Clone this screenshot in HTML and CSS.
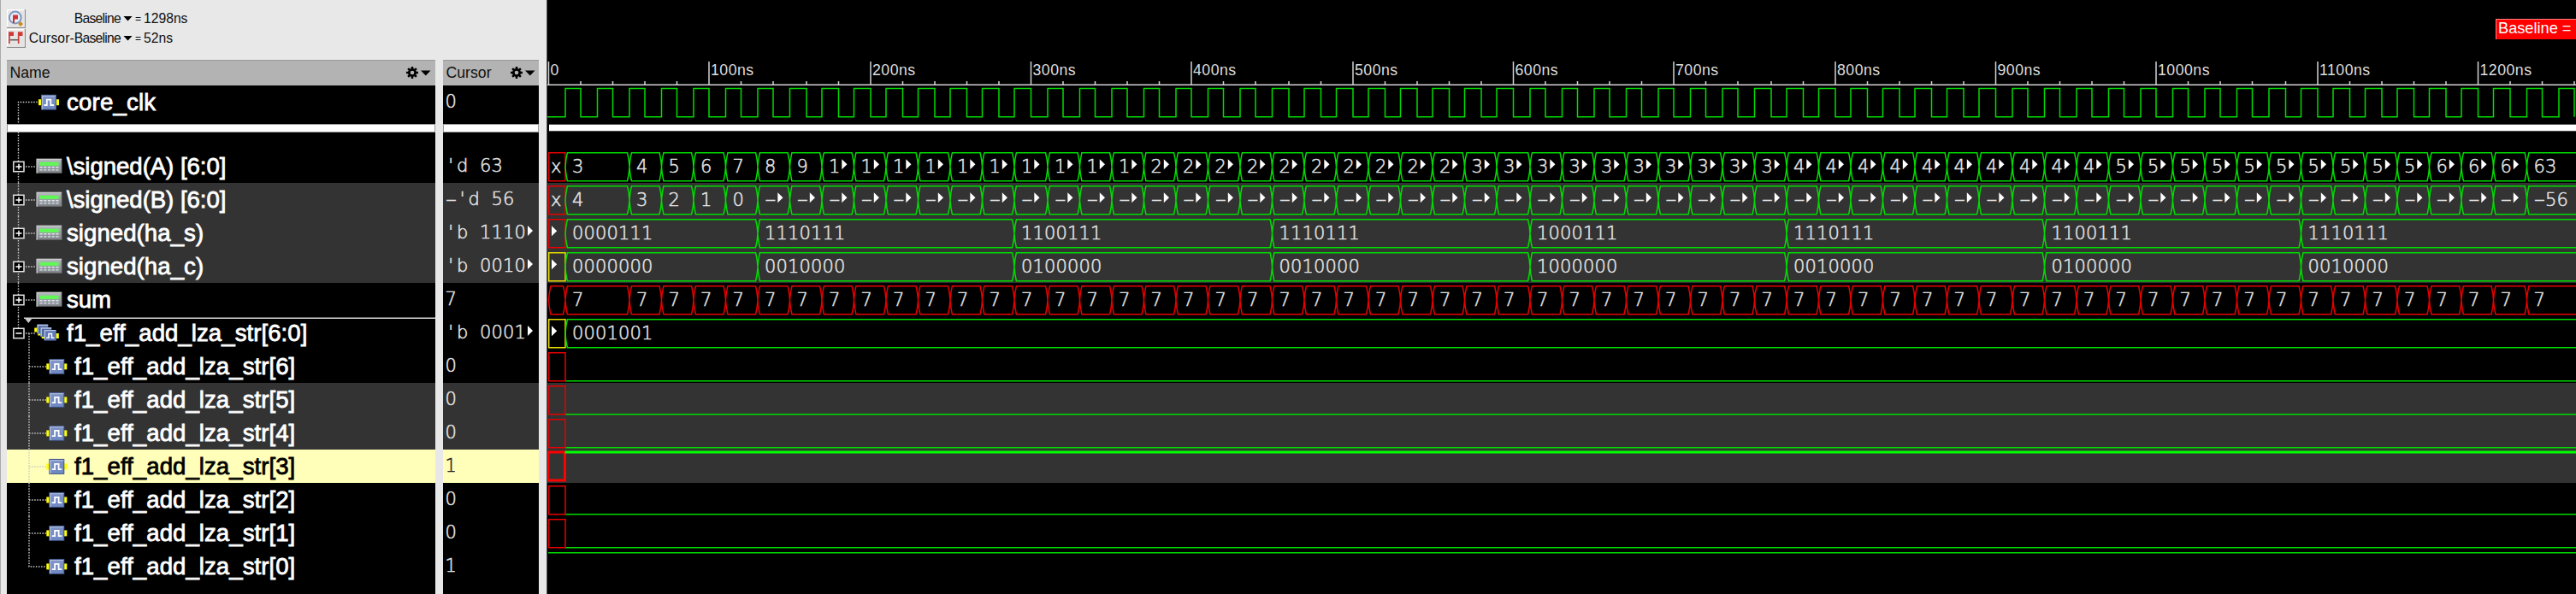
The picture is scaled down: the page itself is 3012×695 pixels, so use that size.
FILE: index.html
```html
<!DOCTYPE html>
<html lang="en">
<head>
<meta charset="utf-8">
<title>Waveform</title>
<link rel="stylesheet" href="styles.css">
</head>
<body>
<svg class="defs" width="0" height="0" aria-hidden="true">
  <defs>
    <linearGradient id="gBlue" x1="0" y1="0" x2="0" y2="1"><stop offset="0" stop-color="#7f93c4"/><stop offset="1" stop-color="#7089c4"/></linearGradient>
    <linearGradient id="gBus" x1="0" y1="0" x2="0" y2="1"><stop offset="0" stop-color="#b4b9be"/><stop offset="1" stop-color="#80868d"/></linearGradient>
    <symbol id="wire" viewBox="0 0 24 18" overflow="visible">
      <rect x="0" y="5.5" width="24" height="7" fill="#ff0"/>
      <rect x="3" y="0" width="18" height="18" fill="#3f5587"/>
      <rect x="4" y="1" width="16" height="16" fill="url(#gBlue)"/>
      <path d="M4.5 17V1.7H20" fill="none" stroke="#a9b8dc" stroke-width="1.4"/>
      <path d="M6.5 12.3H9.8V6H14.3V12.3H18" fill="none" stroke="#fff" stroke-width="1.8"/>
    </symbol>
    <symbol id="bus" viewBox="0 0 30 17" overflow="visible">
      <rect x="0" y="0" width="30" height="17" fill="#777"/>
      <rect x="1" y="1" width="28" height="15" fill="url(#gBus)"/>
      <path d="M.7 17V.7H29.5" fill="none" stroke="#ccc" stroke-width="1.2"/>
      <rect x="4" y="4" width="22" height="4.2" fill="#60f855"/>
      <path d="M4 10H26M4 13.2H26" stroke="#dfe5ea" stroke-width="1.4" stroke-dasharray="3.2 1.5"/>
    </symbol>
    <symbol id="wires" viewBox="0 0 29 19" overflow="visible">
      <rect x="0" y="4" width="4" height="5" fill="#ff0"/><rect x="4" y="7" width="4" height="6" fill="#ff0"/><rect x="8.5" y="10.5" width="4" height="6" fill="#ff0"/><rect x="25" y="10.5" width="3.6" height="6" fill="#ff0"/>
      <rect x="3" y="0" width="13" height="11" fill="#5068a0"/><path d="M4 10V1H16" fill="none" stroke="#b8c5e4" stroke-width="1.3"/>
      <rect x="7" y="3.5" width="13" height="11" fill="#5068a0"/><path d="M8 14V4.5H20" fill="none" stroke="#b8c5e4" stroke-width="1.3"/>
      <rect x="11.5" y="6.5" width="14" height="12.5" fill="#5f79b8"/><path d="M12.2 18V7.2H25" fill="none" stroke="#b8c5e4" stroke-width="1.3"/>
      <path d="M14 15.7H16.8V11H20.3V15.7H23.2" fill="none" stroke="#fff" stroke-width="1.5"/>
    </symbol>
    <symbol id="plus" viewBox="0 0 14 13" overflow="visible">
      <rect x=".8" y=".8" width="12.2" height="11.4" fill="#000" stroke="#e4e4e4" stroke-width="1.5"/><path d="M3.5 6.5H10.5M7 3.2V9.8" stroke="#fff" stroke-width="1.5"/>
    </symbol>
    <symbol id="minus" viewBox="0 0 14 13" overflow="visible">
      <rect x=".8" y=".8" width="12.2" height="11.4" fill="#000" stroke="#e4e4e4" stroke-width="1.5"/><path d="M3.5 6.5H10.5" stroke="#fff" stroke-width="1.5"/>
    </symbol>
    <symbol id="gear" viewBox="0 0 30 14" overflow="visible">
      <circle cx="7" cy="7" r="3.7" fill="none" stroke="#000" stroke-width="2.8"/>
      <path d="M7 0V3M7 11V14M0 7H3M11 7H14M2.1 2.1L4.2 4.2M9.8 9.8L11.9 11.9M2.1 11.9L4.2 9.8M9.8 4.2L11.9 2.1" stroke="#000" stroke-width="2.5"/>
      <path d="M17 4.5H28.5L22.8 10.5Z" fill="#000"/>
    </symbol>
    <!-- tree gutters: expandable root, child, last child -->
    <symbol id="tBus" viewBox="0 0 72 39"><path class="dots" d="M13.5 0V39M22 20H33"/><use href="#plus" x="7" y="13.5" width="14" height="13"/><use href="#bus" x="34.5" y="10.7" width="30" height="17"/></symbol>
    <symbol id="tKid" viewBox="0 0 80 39"><path class="dots" d="M26 0V39M26 20H46"/><use href="#wire" x="46.3" y="10.9" width="24" height="18"/></symbol>
    <symbol id="tEnd" viewBox="0 0 80 39"><path class="dots" d="M26 0V20H46"/><use href="#wire" x="46.3" y="10.9" width="24" height="18"/></symbol>
  </defs>
</svg>

<div class="app">
  <div class="side">
    <div class="toolbar">
      <div class="tool">
        <svg class="btn" viewBox="0 0 22 22"><rect width="22" height="22" fill="#8c8c8c"/><rect width="20.7" height="20.7" fill="#fff"/><rect x="1.3" y="1.3" width="19.4" height="19.4" fill="#e6e4e2"/><path d="M14.5 15.5L17.5 18.5" stroke="#c98a18" stroke-width="4"/><circle cx="9.8" cy="9.5" r="6.9" fill="#e4edf8" stroke="#7f98c2" stroke-width="2"/><path d="M7 6.5H13V11.5H9V16H7Z" fill="#d03030"/></svg>
        <span class="label">Baseline</span><i class="caret"></i><span class="eq">=</span><span>1298ns</span>
      </div>
      <div class="tool">
        <svg class="btn" viewBox="0 0 22 22"><rect width="22" height="22" fill="#8c8c8c"/><rect width="20.7" height="20.7" fill="#fff"/><rect x="1.3" y="1.3" width="19.4" height="19.4" fill="#e6e4e2"/><path d="M4 12.7H14" stroke="#555" stroke-width="1.5"/><path d="M2.9 4V17M13.7 4V17" stroke="#cf3b3b" stroke-width="1.7"/><path d="M2 3.2H8V8H2ZM13 3.2H18.5V8H13Z" fill="#d03a3a"/></svg>
        <span class="label"><span class="wide">Cursor-</span>Baseline</span><i class="caret"></i><span class="eq">=</span><span>52ns</span>
      </div>
    </div>
    <div class="columns">
      <div class="col names">
        <div class="head"><span>Name</span><svg class="gear"><use href="#gear" width="30" height="14"/></svg></div>
        <div class="row"><svg class="gut"><path class="dots" d="M13.5 39V19.5H37"/><use href="#wire" x="37" y="10.7" width="24" height="18"/></svg><span class="clk">core_clk</span></div>
        <div class="gap"><svg class="gut"><path class="dots" d="M13.5 0V36"/></svg><b></b></div>
        <div class="row"><svg class="gut"><use href="#tBus" width="72" height="39"/></svg><span class="tight">\signed(A) [6:0]</span></div>
        <div class="row alt"><svg class="gut"><use href="#tBus" width="72" height="39"/></svg><span class="tight">\signed(B) [6:0]</span></div>
        <div class="row alt"><svg class="gut"><use href="#tBus" width="72" height="39"/></svg><span>signed(ha_s)</span></div>
        <div class="row alt"><svg class="gut"><use href="#tBus" width="72" height="39"/></svg><span>signed(ha_c)</span></div>
        <div class="row"><svg class="gut"><use href="#tBus" width="72" height="39"/></svg><span class="tight">sum</span></div>
        <div class="row"><svg class="gut"><path class="dots" d="M13.5 0V14M26 20V39M22 20H33"/><path d="M20 2.3H501" stroke="#d8d8d8" stroke-width="1.6"/><path d="M20.5 2H30L25.3 8Z" fill="#ccc"/><use href="#minus" x="7" y="13.5" width="14" height="13"/><use href="#wires" x="32.2" y="9.5" width="29" height="19"/></svg><span>f1_eff_add_lza_str[6:0]</span></div>
        <div class="row kid"><svg class="gut"><use href="#tKid" width="80" height="39"/></svg><span>f1_eff_add_lza_str[6]</span></div>
        <div class="row kid alt"><svg class="gut"><use href="#tKid" width="80" height="39"/></svg><span>f1_eff_add_lza_str[5]</span></div>
        <div class="row kid alt"><svg class="gut"><use href="#tKid" width="80" height="39"/></svg><span>f1_eff_add_lza_str[4]</span></div>
        <div class="row kid sel"><svg class="gut"><use href="#tKid" width="80" height="39"/></svg><span>f1_eff_add_lza_str[3]</span></div>
        <div class="row kid"><svg class="gut"><use href="#tKid" width="80" height="39"/></svg><span>f1_eff_add_lza_str[2]</span></div>
        <div class="row kid"><svg class="gut"><use href="#tKid" width="80" height="39"/></svg><span>f1_eff_add_lza_str[1]</span></div>
        <div class="row kid"><svg class="gut"><use href="#tEnd" width="80" height="39"/></svg><span>f1_eff_add_lza_str[0]</span></div>
      </div>
      <div class="col values">
        <div class="head"><span>Cursor</span><svg class="gear"><use href="#gear" width="30" height="14"/></svg></div>
        <div class="row">0</div>
        <div class="gap"><b></b></div>
        <div class="row"><i>'</i>d 63</div>
        <div class="row alt"><i class="neg">-</i><i>'</i>d 56</div>
        <div class="row alt"><i>'</i>b 1110<u class="more"></u></div>
        <div class="row alt"><i>'</i>b 0010<u class="more"></u></div>
        <div class="row">7</div>
        <div class="row"><i>'</i>b 0001<u class="more"></u></div>
        <div class="row">0</div>
        <div class="row alt">0</div>
        <div class="row alt">0</div>
        <div class="row sel">1</div>
        <div class="row">0</div>
        <div class="row">0</div>
        <div class="row">1</div>
      </div>
    </div>
  </div>
  <div class="waves" id="waves">
    <div class="marker"><span class="flag">Baseline =</span></div>
  </div>
</div>
<script src="waves.js"></script>
</body>
</html>
```

FILE: styles.css
```css
* { box-sizing: border-box; }
body { margin: 0; background: #000; overflow: hidden; font-family: "Liberation Sans", Arial, sans-serif; }
.defs { position: absolute; }
.app { display: flex; width: 3012px; height: 695px; }

.side { width: 640px; flex: none; background: #e8e8e8; border-left: 1.5px solid #aaa; border-right: 1px solid #555; display: flex; flex-direction: column; }
.toolbar { height: 70px; padding: 10px 0 0 7px; color: #111; font-size: 15.7px; }
.tool { display: flex; align-items: center; height: 23px; }
.btn { width: 22px; height: 22px; }
.label { width: 111px; text-align: right; letter-spacing: -0.75px; white-space: nowrap; }
.wide { letter-spacing: .1px; }
.caret { width: 11px; height: 6px; margin: 0 3px 0 3px; background: #000; clip-path: polygon(0 0, 100% 0, 50% 100%); }
.eq { font-size: 12px; width: 10px; }

.columns { display: flex; flex: 1; gap: 9px; padding-left: 6.5px; }
.col { display: flex; flex-direction: column; background: #000; color: #fff; }
.names { width: 501px; }
.values { width: 112px; }
.head { height: 30px; flex: none; display: flex; align-items: center; justify-content: space-between; background: #b3b3b3; border-top: 1.5px solid #9a9a9a; color: #111; font-size: 17.7px; padding: 0 4px 1px 4px; }
.gear { width: 30px; height: 14px; overflow: visible; }
.values .gear { margin-right: -1px; }
.row { height: 39px; flex: none; display: flex; align-items: center; white-space: pre; }
.alt { background: #333; }
.gap { height: 36px; flex: none; position: relative; }
.gap b { position: absolute; left: 1px; right: 1px; top: 7px; height: 8px; background: #fff; outline: .5px solid #999; }

.names .row { font-size: 27.6px; line-height: 39px; letter-spacing: .05px; -webkit-text-stroke: .8px currentColor; }
.names .clk { letter-spacing: .2px; }
.names .tight { letter-spacing: -.05px; }
.gut { width: 70.5px; height: 39px; flex: none; overflow: visible; }
.kid .gut { width: 79.5px; }
.dots { fill: none; stroke: #ccc; stroke-width: 1.4; stroke-dasharray: 1.5 1.6; }

.values .row { font: 200 21px/39px "DejaVu Sans", sans-serif; letter-spacing: .14px; word-spacing: 6.7px; color: #e4e4e4; -webkit-text-stroke: .5px currentColor; padding-left: 3px; }
.values i { font-style: normal; width: 13.5px; text-align: center; }
.values .neg { transform: scaleX(1.8); }
.more { width: 6px; height: 12px; margin: -5px 0 0 2px; background: #fff; clip-path: polygon(0 0, 100% 50%, 0 100%); }
.row.sel { background: #ffffb9; color: #000; }
.values .row.sel { color: #222; }

.waves { flex: 1; min-width: 0; display: flex; flex-direction: column; background: #000; }
.marker { height: 60px; flex: none; display: flex; justify-content: flex-end; align-items: flex-start; padding-top: 22px; }
.flag { width: 94px; height: 24px; background: #f00; color: #fff; border-top: 1.5px solid #ff8080; border-left: 1.5px solid #ff8080; font-size: 18.2px; line-height: 21px; padding-left: 2px; white-space: nowrap; overflow: hidden; }
.strip { display: block; flex: none; width: 2372px; overflow: hidden; }
.strip path { fill: none; stroke-width: 1.5; }
.g { stroke: #00dc00; }
.r { stroke: #e60000; }
.y { stroke: #e6dc00; }
.strip .thick { stroke-width: 3; }
.strip .g.thick { stroke: #00ff00; }
.strip .r.thick { stroke: #ff0000; }
.strip .tick { stroke: #d2d2d2; }
.strip .tri { fill: #fff; stroke: none; }
.num { fill: #e4e4e4; stroke: #e4e4e4; stroke-width: .5px; font: 200 21px "DejaVu Sans", sans-serif; letter-spacing: .14px; }
.time { fill: #ddd; font: 17.7px "Liberation Sans", Arial, sans-serif; letter-spacing: .5px; }
```

FILE: waves.js
```js
const END = 3020;
const box = document.getElementById("waves");
// Simulation time (ns) to horizontal position.
const X = t => 641.5 + 1.5 * Math.round(t * 1.2533);
const TOP = 3.7, LOW = 36.7, MID = 20.2;

function strip(h, body, alt) {
  box.insertAdjacentHTML("beforeend",
    `<svg class="strip${alt ? " alt" : ""}" height="${h}" viewBox="640 0 2372 ${h}">${body}</svg>`);
}
const path = (cls, d) => `<path class="${cls}" d="${d}"/>`;
const num = (x, s) => `<text class="num" x="${x}" y="26.7">${s}</text>`;
const dash = x => `<text class="num" x="${x}" y="26" textLength="14" lengthAdjust="spacingAndGlyphs">-</text>`;
const tri = x => path("tri", `M${x} 11.3L${x + 6.2} 17.2L${x} 23.2Z`);
const rect = cls => path(cls, `M641.7 ${TOP}H661V${LOW}H641.7Z`);

// Ruler
let d = "M640 39.3H3012", labels = "";
for (let t = 0; t <= 1260; t += 20) {
  const major = t % 100 === 0;
  d += `M${X(t)} ${major ? 12 : 35}V39`;
  if (major) labels += `<text class="time" x="${X(t) + 2}" y="27.7">${t ? t + "ns" : 0}</text>`;
}
strip(40, path("tick", d) + labels);

// Clock
d = `M640 ${LOW}`;
for (let t = 10; t <= 1260; t += 20) d += `H${X(t)}V${TOP - .2}H${X(t + 10)}V${LOW}`;
strip(39, path("g", d));
strip(36, `<rect x="642" y="6.7" width="2400" height="7.6" fill="#fff"/>`);

// Value lanes: each entry is [start time, value].
function lane(color, cells, first) {
  let p = "", text = "";
  cells.forEach(([t, v], i) => {
    const a = X(t), b = i + 1 < cells.length ? X(cells[i + 1][0]) : END;
    p += `M${a} ${MID}L${a + .8} 12L${a + 2.4} ${TOP}H${b - 2.4}L${b - .8} 12L${b} ${MID}L${b - .8} 28.5L${b - 2.4} ${LOW}H${a + 2.4}L${a + .8} 28.5Z`;
    const x = a + 7.9, cut = v.length > 1 && b - a < 45;
    if (v[0] === "-") text += dash(x) + (cut ? "" : num(x + 13.5, v.slice(1)));
    else if (v) text += num(x, cut ? v[0] : v);
    if (cut) text += tri(a + 23.3);
  });
  return (first || "") + path(color, p) + text;
}
const cross = `<text class="num" x="644" y="26.7">x</text>`;
const each = (from, to, fn) => {
  const out = [];
  for (let t = from; t <= to; t += 20) out.push([t, String(fn(t))]);
  return out;
};
const edges = [10, 130, 290, 450, 610, 770, 930, 1090];
const zip = list => edges.map((t, i) => [t, list[i]]);

strip(39, lane("g", [[10, "3"], ...each(50, 1230, t => 4 + (t - 50) / 20)], rect("r") + cross));
strip(39, lane("g", [[10, "4"], ...each(50, 1230, t => 3 - (t - 50) / 20)], rect("r") + cross), true);
strip(39, lane("g", zip(["0000111", "1110111", "1100111", "1110111", "1000111", "1110111", "1100111", "1110111"]), rect("r") + tri(645)), true);
strip(39, lane("g", zip(["0000000", "0010000", "0100000", "0010000", "1000000", "0010000", "0100000", "0010000"]), rect("y") + tri(645)), true);
strip(39, lane("r", [[0, ""], [10, "7"], ...each(50, 1230, () => 7)]));
strip(39, lane("g", [[10, "0001001"]], rect("y") + tri(645)));

// Single-bit lanes
const low = path("g", `M661 ${LOW}H${END}`) + rect("r");
strip(39, low);
strip(39, low, true);
strip(39, low, true);
strip(39, path("r thick", "M641 3H660.5V36H641Z") + path("g thick", `M660.5 3H${END}`), true);
strip(39, low);
strip(39, low);
strip(39, path("g", `M641 ${TOP}H${END}`));
```
